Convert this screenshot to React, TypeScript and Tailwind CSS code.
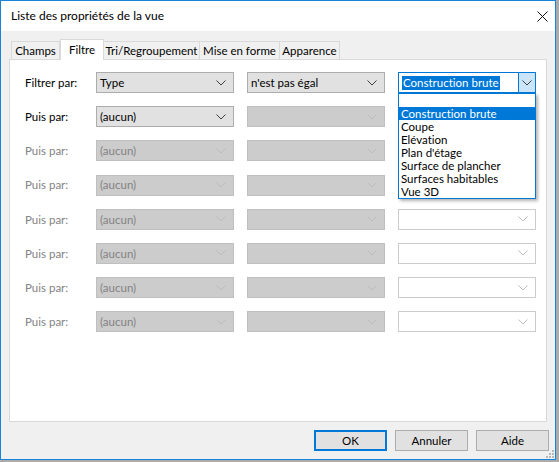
import React from "react";

function Chevron({ color }: { color: string }) {
  return (
    <svg width="10" height="6" viewBox="0 0 10 6" className="shrink-0">
      <path d="M0.5 0.5 L5 5 L9.5 0.5" fill="none" stroke={color} strokeWidth="1" />
    </svg>
  );
}

type ComboKind = "enabled" | "disabled" | "white";

function Combo({ kind, text }: { kind: ComboKind; text?: string }) {
  const cls =
    kind === "enabled"
      ? "bg-[#e1e1e1] border-[#adadad] text-black"
      : kind === "disabled"
      ? "bg-[#cccccc] border-[#bfbfbf] text-[#838383]"
      : "bg-white border-[#cccccc] text-black";
  const chev = kind === "enabled" ? "#404040" : "#bcbcbc";
  return (
    <div className={`h-[21px] w-[138px] border flex items-center justify-between pl-[3px] pr-[7px] ${cls}`}>
      <span className="text-[11.5px] leading-none">{text ?? ""}</span>
      <Chevron color={chev} />
    </div>
  );
}

function ActiveCombo() {
  const items = [
    "",
    "Construction brute",
    "Coupe",
    "Elévation",
    "Plan d'étage",
    "Surface de plancher",
    "Surfaces habitables",
    "Vue 3D",
  ];
  return (
    <div className="relative w-[138px] h-[21px]">
      <div className="h-[21px] w-[138px] border border-[#0078d7] bg-white flex items-center">
        <div className="flex-1 pl-[3px] flex items-center">
          <span className="bg-[#0078d7] text-white text-[11.5px] leading-[14px] px-[1px]">Construction brute</span>
        </div>
        <div className="w-[17px] h-full bg-[#cce4f7] border-l border-[#0078d7] flex items-center justify-center">
          <Chevron color="#404040" />
        </div>
      </div>
      <div className="absolute left-0 top-[21px] w-[138px] border border-[#0078d7] bg-white shadow-[2px_2px_3px_rgba(0,0,0,0.3)] z-10">
        {items.map((it, i) => (
          <div
            key={i}
            className={`h-[13px] pl-[2px] text-[11.5px] leading-[13px] whitespace-nowrap ${
              i === 1 ? "bg-[#0078d7] text-white" : "text-black"
            }`}
          >
            {it}
          </div>
        ))}
      </div>
    </div>
  );
}

export default function App() {
  const tabs = [
    { label: "Champs", w: 49 },
    { label: "Filtre", w: 44, active: true },
    { label: "Tri/Regroupement", w: 97 },
    { label: "Mise en forme", w: 81 },
    { label: "Apparence", w: 61 },
  ];
  const disabledRows = [0, 1, 2, 3, 4, 5];
  return (
    <div
      className="w-[559px] h-[462px] bg-[#ababab] overflow-hidden [font-family:Lato,'Noto_Sans',sans-serif] [font-variant-ligatures:none]"
    >
      <div className="w-[556px] h-[460px] border border-[#1883d7] flex flex-col bg-[#f0f0f0] relative">
        {/* Title bar */}
        <div className="h-[30px] bg-white flex items-center justify-between pl-[10px] pr-[7px] shrink-0">
          <span className="text-[12px] text-black">Liste des propriétés de la vue</span>
          <svg width="11" height="11" viewBox="0 0 11 11">
            <path d="M0.5 0.5 L10.5 10.5 M10.5 0.5 L0.5 10.5" stroke="#111" strokeWidth="1" />
          </svg>
        </div>
        {/* Body */}
        <div className="flex-1 flex flex-col px-[8px] pt-[8px]">
          {/* Tabs */}
          <div className="flex items-end h-[20px] pl-[2px] relative z-[1]">
            {tabs.map((t) =>
              t.active ? (
                <div
                  key={t.label}
                  className="h-[21px] -mb-[1px] bg-white border border-b-0 border-[#d9d9d9] flex items-start justify-center pt-[1px] text-[11.5px] text-black whitespace-nowrap"
                  style={{ width: t.w }}
                >
                  {t.label}
                </div>
              ) : (
                <div
                  key={t.label}
                  className="h-[18px] bg-[#f0f0f0] border border-b-0 border-[#d9d9d9] -ml-[1px] first:ml-0 flex items-center justify-center text-[11.5px] text-black whitespace-nowrap"
                  style={{ width: t.w }}
                >
                  {t.label}
                </div>
              )
            )}
          </div>
          {/* Panel */}
          <div className="h-[363px] bg-white border border-[#d9d9d9] pl-[15px] pt-[12px] flex flex-col gap-[13.2px]">
            <div className="flex items-center h-[21px]">
              <div className="w-[71px] text-[11.5px] text-black">Filtrer par:</div>
              <Combo kind="enabled" text="Type" />
              <div className="w-[13px]" />
              <Combo kind="enabled" text="n'est pas égal" />
              <div className="w-[13px]" />
              <ActiveCombo />
            </div>
            <div className="flex items-center h-[21px]">
              <div className="w-[71px] text-[11.5px] text-black">Puis par:</div>
              <Combo kind="enabled" text="(aucun)" />
              <div className="w-[13px]" />
              <Combo kind="disabled" />
            </div>
            {disabledRows.map((r) => (
              <div key={r} className="flex items-center h-[21px]">
                <div className="w-[71px] text-[11.5px] text-[#838383]">Puis par:</div>
                <Combo kind="disabled" text="(aucun)" />
                <div className="w-[13px]" />
                <Combo kind="disabled" />
                <div className="w-[13px]" />
                {r >= 2 ? <Combo kind="white" /> : <div className="w-[138px]" />}
              </div>
            ))}
          </div>
          {/* Buttons */}
          <div className="flex justify-end gap-[8px] mt-[8px] -mr-[2px]">
            <button className="w-[73px] h-[21px] bg-[#e1e1e1] border-2 border-[#0078d7] text-[11.5px] text-black flex items-center justify-center">
              OK
            </button>
            <button className="w-[73px] h-[21px] bg-[#e1e1e1] border border-[#adadad] text-[11.5px] text-black flex items-center justify-center">
              Annuler
            </button>
            <button className="w-[73px] h-[21px] bg-[#e1e1e1] border border-[#adadad] text-[11.5px] text-black flex items-center justify-center">
              Aide
            </button>
          </div>
        </div>
        {/* Resize grip */}
        <svg className="absolute right-[1px] bottom-[1px]" width="8" height="8" viewBox="0 0 8 8">
          <rect x="6" y="0" width="2" height="2" fill="#b8b8b8" />
          <rect x="3" y="3" width="2" height="2" fill="#b8b8b8" />
          <rect x="6" y="3" width="2" height="2" fill="#b8b8b8" />
          <rect x="0" y="6" width="2" height="2" fill="#b8b8b8" />
          <rect x="3" y="6" width="2" height="2" fill="#b8b8b8" />
          <rect x="6" y="6" width="2" height="2" fill="#b8b8b8" />
        </svg>
      </div>
    </div>
  );
}
